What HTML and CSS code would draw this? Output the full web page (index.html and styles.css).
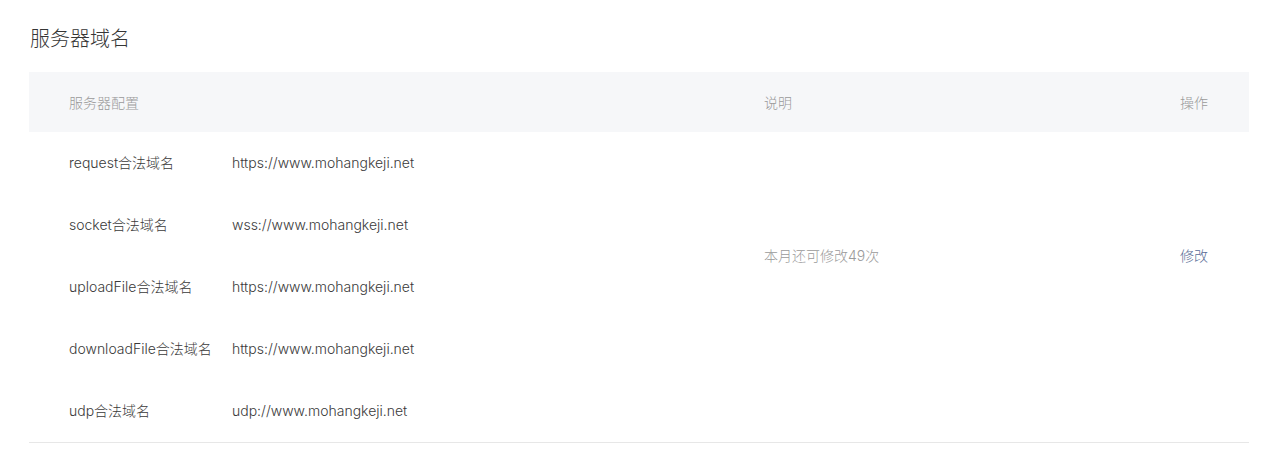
FILE: index.html
```html
<!DOCTYPE html>
<html lang="zh-CN">
<head>
<meta charset="utf-8">
<title>服务器域名</title>
<link rel="stylesheet" href="styles.css">
</head>
<body>
<div class="page">
  <h2 class="title">服务器域名</h2>
  <div class="table">
    <div class="thead grid">
      <div class="th">服务器配置</div>
      <div class="th">说明</div>
      <div class="th right">操作</div>
    </div>
    <div class="tbody grid">
      <div class="config">
        <div class="row"><span class="label">request合法域名</span><span class="value">https://www.mohangkeji.net</span></div>
        <div class="row"><span class="label">socket合法域名</span><span class="value">wss://www.mohangkeji.net</span></div>
        <div class="row"><span class="label">uploadFile合法域名</span><span class="value">https://www.mohangkeji.net</span></div>
        <div class="row"><span class="label">downloadFile合法域名</span><span class="value">https://www.mohangkeji.net</span></div>
        <div class="row"><span class="label">udp合法域名</span><span class="value">udp://www.mohangkeji.net</span></div>
      </div>
      <div class="desc">本月还可修改49次</div>
      <div class="action"><a class="link" href="#">修改</a></div>
    </div>
  </div>
</div>
</body>
</html>
```

FILE: styles.css
```css
* { box-sizing: border-box; }
html, body { margin: 0; padding: 0; background: #fff; }
body {
  font-family: "Inter", "Noto Sans CJK SC", sans-serif;
  font-size: 14px;
  color: #353535;
}
.page {
  padding: 24px 19px 0 29px;
}
.title {
  margin: 0 0 20px 1px;
  font-family: "Noto Sans CJK SC", sans-serif;
  font-size: 20px;
  font-weight: 300;
  line-height: 28px;
  color: #353535;
}
.table {
  width: 1220px;
  border-bottom: 1px solid #e7e7e7;
}
.grid {
  display: grid;
  grid-template-columns: 695px 1fr auto;
  padding: 0 41px 0 40px;
}
.thead {
  background: #f6f7f9;
  height: 60px;
  align-items: center;
}
.th {
  color: #9a9a9a;
  font-size: 14px;
  font-family: "Noto Sans CJK SC", sans-serif;
  font-weight: 300;
}
.right { text-align: right; }
.tbody {
  align-items: start;
}
.config {
  display: flex;
  flex-direction: column;
}
.row {
  height: 62px;
  display: flex;
  align-items: center;
  font-size: 14px;
  line-height: 20px;
  font-weight: 300;
  color: #3a3a3a;
}
.label {
  width: 163px;
  flex: none;
}
.desc {
  color: #9a9a9a;
  font-size: 14px;
  font-weight: 300;
  line-height: 20px;
  padding-top: 114px;
}
.action {
  text-align: right;
  font-size: 14px;
  font-weight: 300;
  line-height: 20px;
  padding-top: 114px;
}
.link {
  color: #576b95;
  text-decoration: none;
}
```
